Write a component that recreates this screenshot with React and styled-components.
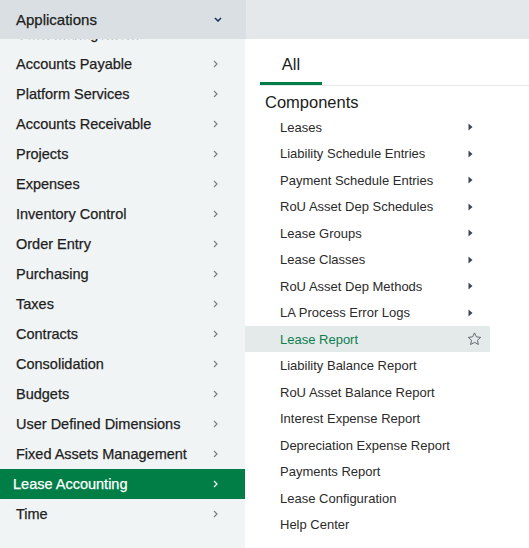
import React from 'react';
import styled, { createGlobalStyle } from 'styled-components';

const GlobalStyle = createGlobalStyle`
  html, body {
    margin: 0;
    padding: 0;
    background: #ffffff;
    overflow: hidden;
  }
  body {
    font-family: "Liberation Sans", Arial, sans-serif;
  }
`;

const apps = [
  'Cash Management',
  'Accounts Payable',
  'Platform Services',
  'Accounts Receivable',
  'Projects',
  'Expenses',
  'Inventory Control',
  'Order Entry',
  'Purchasing',
  'Taxes',
  'Contracts',
  'Consolidation',
  'Budgets',
  'User Defined Dimensions',
  'Fixed Assets Management',
  'Lease Accounting',
  'Time',
];

const components = [
  { label: 'Leases', sub: true },
  { label: 'Liability Schedule Entries', sub: true },
  { label: 'Payment Schedule Entries', sub: true },
  { label: 'RoU Asset Dep Schedules', sub: true },
  { label: 'Lease Groups', sub: true },
  { label: 'Lease Classes', sub: true },
  { label: 'RoU Asset Dep Methods', sub: true },
  { label: 'LA Process Error Logs', sub: true },
  { label: 'Lease Report', active: true },
  { label: 'Liability Balance Report' },
  { label: 'RoU Asset Balance Report' },
  { label: 'Interest Expense Report' },
  { label: 'Depreciation Expense Report' },
  { label: 'Payments Report' },
  { label: 'Lease Configuration' },
  { label: 'Help Center' },
];

function Chevron({ color = '#7b8088', down = false }) {
  return down ? (
    <svg width="8" height="5" viewBox="0 0 8 5">
      <path d="M1 1 L4 4 L7 1" fill="none" stroke={color} strokeWidth="1.6" />
    </svg>
  ) : (
    <svg width="5" height="8" viewBox="0 0 5 8">
      <path d="M1 1 L4 4 L1 7" fill="none" stroke={color} strokeWidth="1.2" />
    </svg>
  );
}

function Caret() {
  return (
    <svg width="5" height="8" viewBox="0 0 5 8">
      <path d="M0.5 0.5 L4.5 4 L0.5 7.5 Z" fill="#3d4556" />
    </svg>
  );
}

function Star() {
  return (
    <svg width="15" height="14" viewBox="0 0 24 23">
      <path
        d="M12 1.5 L15.1 8 L22.2 8.8 L16.9 13.6 L18.4 20.6 L12 17 L5.6 20.6 L7.1 13.6 L1.8 8.8 L8.9 8 Z"
        fill="none"
        stroke="#5a5f66"
        strokeWidth="1.5"
        strokeLinejoin="round"
      />
    </svg>
  );
}

export default function App() {
  return (
    <>
      <GlobalStyle />
      <Page>
        <TopBar>
          <AppsHeader>
            <span>Applications</span>
            <Chevron down color="#1f3756" />
          </AppsHeader>
          <TopBarRest />
        </TopBar>
        <Body>
          <AppsPanel>
            <AppsList>
              {apps.map(name => {
                const selected = name === 'Lease Accounting';
                return (
                  <AppRow key={name} $selected={selected}>
                    <span>{name}</span>
                    <Chevron color={selected ? '#ffffff' : '#7b8088'} />
                  </AppRow>
                );
              })}
            </AppsList>
          </AppsPanel>
          <ContentPanel>
            <TabBar>
              <Tab>All</Tab>
            </TabBar>
            <SectionTitle>Components</SectionTitle>
            <ComponentList>
              {components.map(item => (
                <ComponentRow key={item.label} $active={item.active}>
                  <span>{item.label}</span>
                  {item.sub && <Caret />}
                  {item.active && <Star />}
                </ComponentRow>
              ))}
            </ComponentList>
          </ContentPanel>
        </Body>
      </Page>
    </>
  );
}

const Page = styled.div`
  width: 529px;
  height: 548px;
  display: flex;
  flex-direction: column;
  overflow: hidden;
`;

const TopBar = styled.div`
  display: flex;
  height: 39px;
  flex-shrink: 0;
  position: relative;
  z-index: 1;
`;

const AppsHeader = styled.div`
  width: 246px;
  box-sizing: border-box;
  padding: 0 24px 0 16px;
  display: flex;
  align-items: center;
  justify-content: space-between;
  background: #d9dfe2;
  font-size: 15px;
  color: #1c1c1c;
  -webkit-text-stroke: 0.25px #1c1c1c;
`;

const TopBarRest = styled.div`
  flex: 1;
  background: #e4e8eb;
`;

const Body = styled.div`
  flex: 1;
  display: flex;
  min-height: 0;
`;

const AppsPanel = styled.div`
  width: 245px;
  flex-shrink: 0;
  background: #f1f4f5;
  overflow: hidden;
`;

const AppsList = styled.ul`
  list-style: none;
  margin: -20px 0 0;
  padding: 0;
`;

const AppRow = styled.li`
  height: 30px;
  display: flex;
  align-items: center;
  justify-content: space-between;
  box-sizing: border-box;
  padding: ${p => (p.$selected ? '0 27px 0 13px' : '0 27px 0 16px')};
  font-size: 14.5px;
  color: ${p => (p.$selected ? '#ffffff' : '#1e1e1e')};
  -webkit-text-stroke: 0.25px ${p => (p.$selected ? '#ffffff' : '#1e1e1e')};
  background: ${p => (p.$selected ? '#007e46' : 'transparent')};
`;

const ContentPanel = styled.div`
  flex: 1;
  background: #ffffff;
  padding-left: 15px;
`;

const TabBar = styled.div`
  display: flex;
  border-bottom: 1px solid #e6e9eb;
`;

const Tab = styled.div`
  width: 62px;
  height: 36px;
  padding-top: 7px;
  display: flex;
  align-items: center;
  justify-content: center;
  border-bottom: 3px solid #007e46;
  font-size: 16.5px;
  color: #1c1c1c;
`;

const SectionTitle = styled.h2`
  margin: 6px 0 1.75px;
  padding-left: 5px;
  font-size: 16.5px;
  line-height: 20px;
  font-weight: normal;
  color: #1c1c1c;
`;

const ComponentList = styled.ul`
  list-style: none;
  margin: 0 0 0 -15px;
  padding: 0;
  width: 245px;
`;

const ComponentRow = styled.li`
  height: 26.5px;
  display: flex;
  align-items: center;
  justify-content: space-between;
  box-sizing: border-box;
  padding: ${p => (p.$active ? '0 8px 0 35px' : '0 17px 0 35px')};
  font-size: 13px;
  color: ${p => (p.$active ? '#0d7f4f' : '#2b2b2b')};
  background: ${p => (p.$active ? '#e4e9ea' : 'transparent')};
`;
